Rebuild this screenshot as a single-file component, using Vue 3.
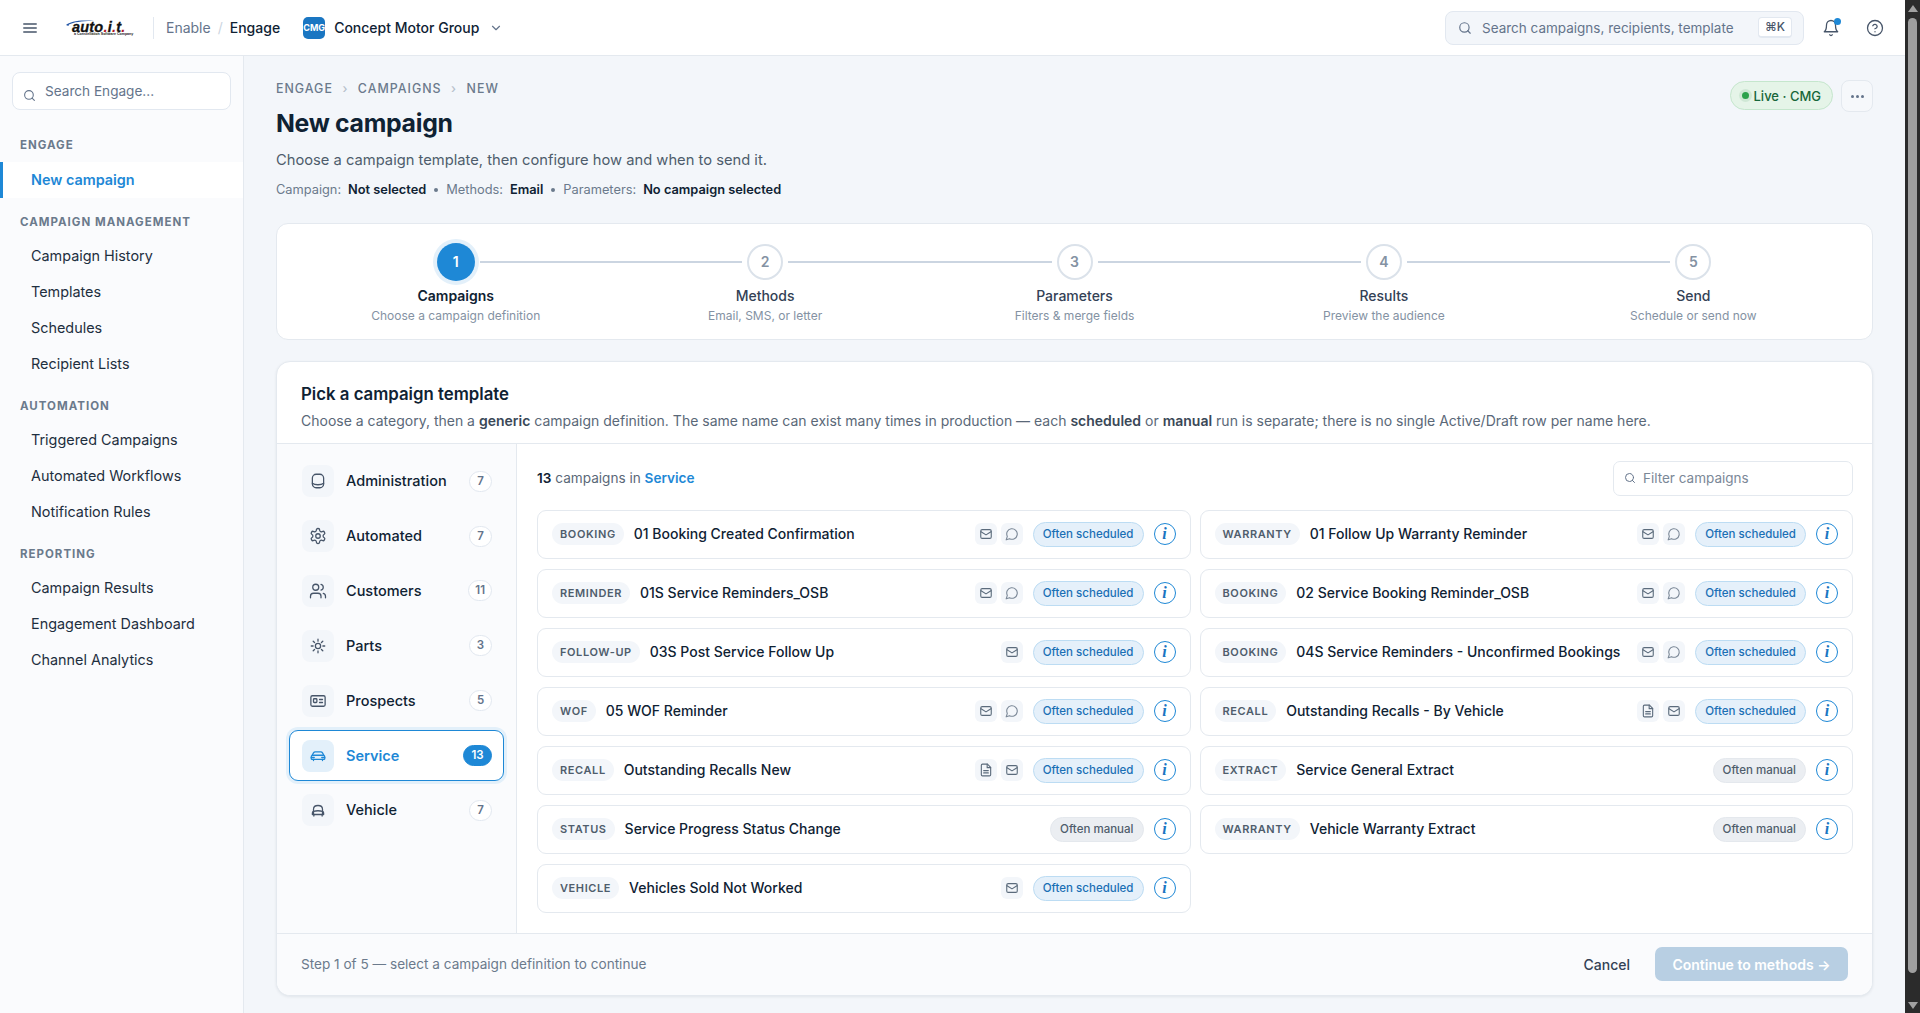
<script setup>
import { computed } from "vue";

const navGroups = [
  { title: "Engage", items: ["New campaign"] },
  { title: "Campaign Management", items: ["Campaign History", "Templates", "Schedules", "Recipient Lists"] },
  { title: "Automation", items: ["Triggered Campaigns", "Automated Workflows", "Notification Rules"] },
  { title: "Reporting", items: ["Campaign Results", "Engagement Dashboard", "Channel Analytics"] },
];

const steps = [
  { n: 1, label: "Campaigns", sub: "Choose a campaign definition" },
  { n: 2, label: "Methods", sub: "Email, SMS, or letter" },
  { n: 3, label: "Parameters", sub: "Filters & merge fields" },
  { n: 4, label: "Results", sub: "Preview the audience" },
  { n: 5, label: "Send", sub: "Schedule or send now" },
];

const categories = [
  { name: "Administration", count: 7, icon: "db" },
  { name: "Automated", count: 7, icon: "gear" },
  { name: "Customers", count: 11, icon: "users" },
  { name: "Parts", count: 3, icon: "sun" },
  { name: "Prospects", count: 5, icon: "card" },
  { name: "Service", count: 13, icon: "car" },
  { name: "Vehicle", count: 7, icon: "carFront" },
];

const activeCategory = "Service";

const campaigns = [
  { tag: "Booking", name: "01 Booking Created Confirmation", ch: ["mail", "chat"], often: "scheduled" },
  { tag: "Warranty", name: "01 Follow Up Warranty Reminder", ch: ["mail", "chat"], often: "scheduled" },
  { tag: "Reminder", name: "01S Service Reminders_OSB", ch: ["mail", "chat"], often: "scheduled" },
  { tag: "Booking", name: "02 Service Booking Reminder_OSB", ch: ["mail", "chat"], often: "scheduled" },
  { tag: "Follow-up", name: "03S Post Service Follow Up", ch: ["mail"], often: "scheduled" },
  { tag: "Booking", name: "04S Service Reminders - Unconfirmed Bookings", ch: ["mail", "chat"], often: "scheduled" },
  { tag: "WOF", name: "05 WOF Reminder", ch: ["mail", "chat"], often: "scheduled" },
  { tag: "Recall", name: "Outstanding Recalls - By Vehicle", ch: ["doc", "mail"], often: "scheduled" },
  { tag: "Recall", name: "Outstanding Recalls New", ch: ["doc", "mail"], often: "scheduled" },
  { tag: "Extract", name: "Service General Extract", ch: [], often: "manual" },
  { tag: "Status", name: "Service Progress Status Change", ch: [], often: "manual" },
  { tag: "Warranty", name: "Vehicle Warranty Extract", ch: [], often: "manual" },
  { tag: "Vehicle", name: "Vehicles Sold Not Worked", ch: ["mail"], often: "scheduled" },
];

const total = computed(() => campaigns.length);
</script>

<template>
  <div class="shell">
    <div class="page">
      <header class="topbar">
        <svg class="burger" viewBox="0 0 14 10" width="14" height="10" fill="none" stroke="#475569" stroke-width="1.5" stroke-linecap="round">
          <path d="M.8 1h12.4M.8 5h12.4M.8 9h12.4" />
        </svg>
        <div class="logo">
          <svg class="logo-swoosh" viewBox="0 0 28 6" width="28" height="6" fill="#2456a6">
            <path d="M0 5C4 1.500 14-.5 28 1 17 .8 8 2 3 4.400L2.400 6z" />
          </svg>
          <span class="logo-word">auto<b>.</b>i<b>.</b>t<b>.</b></span>
          <span class="logo-sub">a Constellation Software Company</span>
        </div>
        <span class="top-divider"></span>
        <span class="crumb-a">Enable</span>
        <span class="crumb-sep">/</span>
        <span class="crumb-b">Engage</span>
        <span class="org-tile">CMG</span>
        <span class="org-name">Concept Motor Group</span>
        <svg class="org-chev" viewBox="0 0 24 24" width="14" height="14" fill="none" stroke="#64748b" stroke-width="2" stroke-linecap="round" stroke-linejoin="round">
          <path d="m6 9 6 6 6-6" />
        </svg>
        <div class="top-search">
          <svg viewBox="0 0 24 24" width="14" height="14" fill="none" stroke="#64748b" stroke-width="2" stroke-linecap="round">
            <circle cx="11" cy="11" r="8" /><path d="m21 21-4.300-4.300" />
          </svg>
          <span class="top-search-text">Search campaigns, recipients, template</span>
          <span class="kbd">⌘K</span>
        </div>
        <div class="bell">
          <svg viewBox="0 0 24 24" width="18" height="18" fill="none" stroke="#475569" stroke-width="1.7" stroke-linecap="round" stroke-linejoin="round">
            <path d="M6 8a6 6 0 0 1 12 0c0 7 3 9 3 9H3s3-2 3-9" /><path d="M10.300 21a1.900 1.900 0 0 0 3.400 0" />
          </svg>
          <span class="bell-dot"></span>
        </div>
        <svg class="help" viewBox="0 0 24 24" width="18" height="18" fill="none" stroke="#475569" stroke-width="1.7" stroke-linecap="round" stroke-linejoin="round">
          <circle cx="12" cy="12" r="10" /><path d="M9.100 9a3 3 0 0 1 5.800 1c0 2-3 3-3 3" /><path d="M12 17h.01" />
        </svg>
      </header>

      <div class="body">
        <aside class="sidebar">
          <div class="side-search">
            <svg viewBox="0 0 24 24" width="13" height="13" fill="none" stroke="#64748b" stroke-width="2" stroke-linecap="round">
              <circle cx="11" cy="11" r="8" /><path d="m21 21-4.300-4.300" />
            </svg>
            <span>Search Engage...</span>
          </div>
          <div v-for="g in navGroups" :key="g.title" class="nav-group">
            <div class="nav-title">{{ g.title }}</div>
            <a v-for="item in g.items" :key="item" class="nav-item" :class="{ active: item === 'New campaign' }">{{ item }}</a>
          </div>
        </aside>

        <main class="main">
          <div class="head">
            <div class="head-left">
              <div class="breadcrumb">
                <span>Engage</span><i>›</i><span>Campaigns</span><i>›</i><span>New</span>
              </div>
              <h1 class="title">New campaign</h1>
              <p class="subtitle">Choose a campaign template, then configure how and when to send it.</p>
              <div class="meta">
                <span>Campaign:</span><b>Not selected</b><em></em>
                <span>Methods:</span><b>Email</b><em></em>
                <span>Parameters:</span><b>No campaign selected</b>
              </div>
            </div>
            <div class="head-right">
              <span class="live"><span class="live-dot"></span>Live · CMG</span>
              <button type="button" class="more"><span></span><span></span><span></span></button>
            </div>
          </div>

          <section class="stepper">
            <div v-for="(s, i) in steps" :key="s.n" class="step" :class="{ current: i === 0 }">
              <div class="step-track">
                <span v-if="i < steps.length - 1" class="step-line"></span>
                <span class="step-dot">{{ s.n }}</span>
              </div>
              <div class="step-label">{{ s.label }}</div>
              <div class="step-sub">{{ s.sub }}</div>
            </div>
          </section>

          <section class="picker">
            <div class="picker-head">
              <h2>Pick a campaign template</h2>
              <p>Choose a category, then a <b>generic</b> campaign definition. The same name can exist many times in production — each <b>scheduled</b> or <b>manual</b> run is separate; there is no single Active/Draft row per name here.</p>
            </div>
            <div class="picker-body">
              <div class="cats">
                <button
                  v-for="c in categories"
                  :key="c.name"
                  type="button"
                  class="cat"
                  :class="{ active: c.name === activeCategory }"
                >
                  <span class="cat-icon">
                    <svg viewBox="0 0 24 24" width="18" height="18" fill="none" stroke="currentColor" stroke-width="1.7" stroke-linecap="round" stroke-linejoin="round">
                      <template v-if="c.icon === 'db'">
                        <rect x="4.500" y="3" width="15" height="18" rx="5" /><path d="M4.500 15c2 1.600 4.600 2 7.500 2s5.500-.4 7.500-2" />
                      </template>
                      <template v-else-if="c.icon === 'gear'">
                        <path d="M12.220 2h-.44a2 2 0 0 0-2 2v.18a2 2 0 0 1-1 1.730l-.43.25a2 2 0 0 1-2 0l-.15-.08a2 2 0 0 0-2.730.73l-.22.38a2 2 0 0 0 .73 2.730l.15.1a2 2 0 0 1 1 1.720v.51a2 2 0 0 1-1 1.740l-.15.09a2 2 0 0 0-.73 2.730l.22.38a2 2 0 0 0 2.730.73l.15-.08a2 2 0 0 1 2 0l.43.25a2 2 0 0 1 1 1.730V20a2 2 0 0 0 2 2h.44a2 2 0 0 0 2-2v-.18a2 2 0 0 1 1-1.730l.43-.25a2 2 0 0 1 2 0l.15.08a2 2 0 0 0 2.730-.73l.22-.39a2 2 0 0 0-.73-2.730l-.15-.08a2 2 0 0 1-1-1.740v-.5a2 2 0 0 1 1-1.740l.15-.09a2 2 0 0 0 .73-2.730l-.22-.38a2 2 0 0 0-2.730-.73l-.15.08a2 2 0 0 1-2 0l-.43-.25a2 2 0 0 1-1-1.730V4a2 2 0 0 0-2-2z" /><circle cx="12" cy="12" r="3" />
                      </template>
                      <template v-else-if="c.icon === 'users'">
                        <path d="M16 21v-2a4 4 0 0 0-4-4H6a4 4 0 0 0-4 4v2" /><circle cx="9" cy="7" r="4" /><path d="M22 21v-2a4 4 0 0 0-3-3.870" /><path d="M16 3.130a4 4 0 0 1 0 7.750" />
                      </template>
                      <template v-else-if="c.icon === 'sun'">
                        <circle cx="12" cy="12" r="3.500" /><path d="M12 3v2.500M12 18.500V21M5.600 5.600l1.800 1.800M16.600 16.600l1.800 1.800M3 12h2.500M18.500 12H21M5.600 18.400l1.800-1.800M16.600 7.400l1.800-1.800" />
                      </template>
                      <template v-else-if="c.icon === 'card'">
                        <rect x="2.500" y="5" width="19" height="14" rx="2" /><rect x="6" y="9" width="4.500" height="5" rx="1" /><path d="M14 10h4M14 14h4" />
                      </template>
                      <template v-else-if="c.icon === 'car'">
                        <path d="M3 15.500v-2.300c0-1 .5-1.600 1.200-2.200L6 7.800C6.500 7 7.300 6.500 8.200 6.500h7.600c.9 0 1.700.5 2.200 1.300l1.800 3.200c.7.6 1.200 1.200 1.200 2.200v2.300c0 .6-.4 1-1 1H4c-.6 0-1-.4-1-1z" /><path d="M4.500 11h15M6 16.500V18M18 16.500V18" /><path d="M3 14h4M17 14h4" />
                      </template>
                      <template v-else>
                        <path d="M6 18v-7c0-3 2-5 6-5s6 2 6 5v7" /><path d="M4.500 16c0-1 .7-2 1.500-2.200 1.800-.5 3.800-.8 6-.8s4.200.3 6 .8c.8.2 1.500 1.200 1.500 2.200v2H4.500z" /><path d="M6.500 18v2M17.500 18v2" />
                      </template>
                    </svg>
                  </span>
                  <span class="cat-name">{{ c.name }}</span>
                  <span class="cat-count">{{ c.count }}</span>
                </button>
              </div>

              <div class="list">
                <div class="list-head">
                  <div class="list-count"><b>{{ total }}</b> campaigns in <span>Service</span></div>
                  <div class="filter">
                    <svg viewBox="0 0 24 24" width="12" height="12" fill="none" stroke="#64748b" stroke-width="2" stroke-linecap="round">
                      <circle cx="11" cy="11" r="8" /><path d="m21 21-4.300-4.300" />
                    </svg>
                    <span>Filter campaigns</span>
                  </div>
                </div>
                <div class="grid">
                  <div v-for="c in campaigns" :key="c.name" class="row">
                    <span class="tag">{{ c.tag }}</span>
                    <span class="name">{{ c.name }}</span>
                    <span v-for="ch in c.ch" :key="ch" class="ch" :class="ch">
                      <svg viewBox="0 0 24 24" width="14" height="14" fill="none" stroke-width="1.9" stroke-linecap="round" stroke-linejoin="round">
                        <template v-if="ch === 'mail'">
                          <rect x="3" y="4.500" width="18" height="15" rx="2.500" /><path d="m3.500 8 8.500 5.500L20.500 8" />
                        </template>
                        <template v-else-if="ch === 'chat'">
                          <path d="M7.900 20A9 9 0 1 0 4 16.100L2 22Z" />
                        </template>
                        <template v-else>
                          <path d="M14.500 2H6a2 2 0 0 0-2 2v16a2 2 0 0 0 2 2h12a2 2 0 0 0 2-2V7.500z" /><path d="M14 2v6h6M8 13h8M8 17h8" />
                        </template>
                      </svg>
                    </span>
                    <span class="often" :class="c.often">Often {{ c.often }}</span>
                    <span class="info">i</span>
                  </div>
                </div>
              </div>
            </div>
            <footer class="picker-foot">
              <span class="foot-text">Step 1 of 5 — select a campaign definition to continue</span>
              <button type="button" class="cancel">Cancel</button>
              <button type="button" class="continue">Continue to methods →</button>
            </footer>
          </section>
        </main>
      </div>
    </div>

    <div class="scrollbar">
      <span class="sb-up"></span>
      <span class="sb-thumb"></span>
      <span class="sb-down"></span>
    </div>
  </div>
</template>

<style>
html,
body {
  margin: 0;
  overflow: hidden;
}
</style>

<style scoped>
.shell {
  display: flex;
  height: 1013px;
  overflow: hidden;
  font-family: Inter, "Liberation Sans", sans-serif;
  color: #0f2233;
  background: #f3f6fa;
}

.page {
  flex: 1;
  min-width: 0;
  display: flex;
  flex-direction: column;
}

.topbar {
  height: 55px;
  flex: none;
  display: flex;
  align-items: center;
  padding-left: 23px;
  background: #fff;
  border-bottom: 1px solid #e4e9ef;
}

.logo {
  position: relative;
  width: 64px;
  height: 16px;
  margin-left: 29px;
}

.logo-swoosh {
  position: absolute;
  left: 0;
  top: 0;
}

.logo-word {
  position: absolute;
  left: 6px;
  top: 2px;
  font: italic 700 14.5px/11px "Liberation Sans", sans-serif;
  letter-spacing: 0.2px;
  -webkit-text-stroke: 0.3px #111;
  color: #111;
}

.logo-word b {
  color: #b0182c;
  -webkit-text-stroke: 0;
}

.logo-sub {
  position: absolute;
  left: 8px;
  top: 12px;
  font: 700 3.6px/5px "Liberation Sans", sans-serif;
  color: #222;
  white-space: nowrap;
}

.top-divider {
  width: 1px;
  height: 22px;
  margin: 0 12px 0 23px;
  background: #e2e8f0;
}

.crumb-a {
  font-size: 14px;
  color: #64748b;
}

.crumb-sep {
  margin: 0 7px;
  font-size: 14px;
  color: #cbd5e1;
}

.crumb-b {
  font-size: 14px;
  font-weight: 500;
  color: #0f2233;
}

.org-tile {
  width: 22px;
  height: 22px;
  margin-left: 23px;
  border-radius: 5px;
  background: #1a76c2;
  color: #fff;
  font-size: 9px;
  font-weight: 700;
  line-height: 22px;
  text-align: center;
}

.org-name {
  margin-left: 9px;
  font-size: 14px;
  font-weight: 500;
}

.org-chev {
  margin-left: 10px;
}

.top-search {
  margin-left: auto;
  width: 359px;
  height: 34px;
  box-sizing: border-box;
  display: flex;
  align-items: center;
  padding: 0 11px 0 12px;
  background: #f3f6fa;
  border: 1px solid #e2e8f0;
  border-radius: 8px;
}

.top-search-text {
  margin-left: 10px;
  flex: 1;
  min-width: 0;
  font-size: 13.5px;
  color: #64748b;
  white-space: nowrap;
}

.kbd {
  width: 34px;
  height: 21px;
  box-sizing: border-box;
  flex: none;
  background: #fff;
  border: 1px solid #e2e8f0;
  border-bottom-width: 2px;
  border-radius: 4px;
  font-size: 12px;
  font-weight: 500;
  line-height: 18px;
  text-align: center;
  color: #475569;
}

.bell {
  position: relative;
  width: 18px;
  height: 18px;
  margin-left: 18px;
}

.bell-dot {
  position: absolute;
  top: -1px;
  right: -1px;
  width: 7px;
  height: 7px;
  border-radius: 50%;
  background: #1e88d6;
}

.help {
  margin: 0 21px 0 26px;
}

.body {
  flex: 1;
  min-height: 0;
  display: flex;
}

.sidebar {
  width: 244px;
  flex: none;
  box-sizing: border-box;
  padding-top: 16px;
  background: #fafbfd;
  border-right: 1px solid #e4e9ef;
}

.side-search {
  height: 38px;
  box-sizing: border-box;
  margin: 0 12px;
  display: flex;
  align-items: center;
  padding-left: 10px;
  background: #fff;
  border: 1px solid #e2e8f0;
  border-radius: 8px;
  font-size: 13.6px;
  color: #64748b;
}

.side-search svg {
  margin: 9px 9px 0 0;
}

.side-search span {
  margin-top: -1px;
}

.nav-group {
  padding-top: 17px;
}

.side-search + .nav-group {
  padding-top: 27.5px;
}

.nav-title {
  height: 15px;
  padding-left: 20px;
  font-size: 11.5px;
  font-weight: 700;
  line-height: 14px;
  letter-spacing: 1px;
  text-transform: uppercase;
  color: #6b7a8c;
}

.nav-title + .nav-item {
  margin-top: 8px;
}

.nav-title + .nav-item.active {
  margin-top: 9px;
}

.nav-item {
  display: block;
  height: 36px;
  padding-left: 31px;
  font-size: 14.4px;
  line-height: 36px;
  color: #1e2f40;
}

.nav-item.active {
  padding-left: 28px;
  background: #fff;
  border-left: 3px solid #1e88d6;
  color: #1e88d6;
  font-weight: 600;
}

.main {
  flex: 1;
  min-width: 0;
  padding: 0 32px;
}

.head {
  display: flex;
  justify-content: space-between;
}

.head-left {
  padding-top: 24px;
}

.breadcrumb {
  display: flex;
  align-items: center;
  height: 16px;
  font-size: 12.4px;
  font-weight: 500;
  letter-spacing: 1px;
  text-transform: uppercase;
  color: #6b7a8c;
}

.breadcrumb i {
  width: 25px;
  font-style: normal;
  text-align: center;
  color: #b6c0cb;
}

.title {
  margin: 9px 0 0;
  font-size: 24.8px;
  font-weight: 700;
  line-height: 36px;
  letter-spacing: -0.3px;
  color: #0f2233;
}

.subtitle {
  margin: 8px 0 0;
  font-size: 14.72px;
  line-height: 22px;
  color: #4e5d6c;
}

.meta {
  display: flex;
  align-items: center;
  margin-top: 8.8px;
  font-size: 12.8px;
  line-height: 20px;
  color: #6b7a8c;
}

.meta b {
  margin-left: 7px;
  font-weight: 600;
  color: #0f2233;
}

.meta em {
  width: 4px;
  height: 4px;
  margin: 0 8px;
  border-radius: 50%;
  background: #6b7a8c;
}

.head-right {
  display: flex;
  gap: 8px;
  padding-top: 24px;
  align-items: flex-start;
}

.live {
  display: flex;
  align-items: center;
  gap: 5px;
  height: 29px;
  box-sizing: border-box;
  margin-top: 1px;
  padding: 0 11px;
  background: #e5f4e8;
  border: 1px solid #c5e6cd;
  border-radius: 15px;
  font-size: 13px;
  font-weight: 500;
  color: #17663a;
}

.live-dot {
  width: 7px;
  height: 7px;
  border-radius: 50%;
  background: #2ca24c;
  box-shadow: 0 0 0 3px #cfe8d5;
}

.more {
  width: 32px;
  height: 32px;
  display: flex;
  align-items: center;
  justify-content: center;
  gap: 2px;
  padding: 0;
  background: #f6f8fb;
  border: 1px solid #e4e9ef;
  border-radius: 8px;
}

.more span {
  width: 3px;
  height: 3px;
  border-radius: 50%;
  background: #64748b;
}

.stepper {
  display: flex;
  height: 117px;
  box-sizing: border-box;
  margin-top: 23px;
  padding: 19px 24px 0;
  background: #fff;
  border: 1px solid #e4e9ef;
  border-radius: 12px;
}

.step {
  flex: 1;
  text-align: center;
}

.step-track {
  position: relative;
  height: 38px;
  display: flex;
  justify-content: center;
  align-items: center;
}

.step-line {
  position: absolute;
  top: 18px;
  left: calc(50% + 23px);
  width: calc(100% - 46px);
  height: 2px;
  background: #cbd5e1;
}

.step-dot {
  width: 36px;
  height: 36px;
  box-sizing: border-box;
  border: 2px solid #dbe2ea;
  border-radius: 50%;
  background: #fff;
  font-size: 14px;
  font-weight: 600;
  line-height: 32px;
  color: #8492a3;
}

.step.current .step-dot {
  width: 38px;
  height: 38px;
  border: 0;
  background: #1e88d6;
  box-shadow: 0 0 0 4px #e3f0fa;
  color: #fff;
  line-height: 38px;
}

.step.current .step-line {
  left: calc(50% + 24px);
  width: calc(100% - 47px);
}

.step-label {
  margin-top: 6px;
  font-size: 14px;
  font-weight: 500;
  line-height: 18px;
  color: #334155;
}

.step.current .step-label {
  font-weight: 600;
  color: #0f2233;
}

.step-sub {
  margin-top: 2px;
  font-size: 12px;
  line-height: 18px;
  color: #8492a3;
}

.picker {
  margin-top: 21px;
  background: #fff;
  border: 1px solid #e4e9ef;
  border-radius: 14px;
  box-shadow: 0 1px 3px rgba(15, 34, 51, 0.08);
  overflow: hidden;
}

.picker-head {
  height: 82px;
  box-sizing: border-box;
  padding: 21px 24px 0;
  border-bottom: 1px solid #e4e9ef;
}

.picker-head h2 {
  margin: 0;
  font-size: 16.8px;
  font-weight: 600;
  line-height: 22px;
  color: #0f2233;
}

.picker-head p {
  margin: 6px 0 0;
  font-size: 14px;
  line-height: 20px;
  color: #5a6878;
}

.picker-head b {
  font-weight: 600;
  color: #3a4857;
}

.picker-body {
  display: flex;
  height: 489px;
}

.cats {
  width: 240px;
  flex: none;
  box-sizing: border-box;
  display: flex;
  flex-direction: column;
  gap: 4.2px;
  padding: 12px 12px 0;
  background: #fafbfd;
  border-right: 1px solid #e4e9ef;
}

.cat {
  display: flex;
  align-items: center;
  height: 50.7px;
  flex: none;
  box-sizing: border-box;
  padding: 0 11px 0 12px;
  background: transparent;
  border: 1px solid transparent;
  border-radius: 9px;
  font-family: inherit;
  color: #0f2233;
}

.cat-icon {
  width: 32px;
  height: 32px;
  flex: none;
  display: flex;
  align-items: center;
  justify-content: center;
  background: #f3f6fa;
  border-radius: 8px;
  color: #475569;
}

.cat-name {
  margin-left: 12px;
  margin-top: -1px;
  flex: 1;
  text-align: left;
  font-size: 14.5px;
  font-weight: 500;
}

.cat-count {
  min-width: 23px;
  box-sizing: border-box;
  height: 21px;
  padding: 0 6px;
  background: #fff;
  border: 1px solid #e2e8f0;
  border-radius: 11px;
  font-size: 11.5px;
  font-weight: 600;
  line-height: 19px;
  text-align: center;
  color: #64748b;
}

.cat.active {
  background: #fff;
  border-color: #1e88d6;
  box-shadow: 0 0 0 3px #e3f0fa;
  color: #1e88d6;
}

.cat.active .cat-icon {
  background: #e3f0fa;
  color: #1e88d6;
}

.cat.active .cat-name {
  font-weight: 600;
}

.cat.active .cat-count {
  background: #1e88d6;
  border-color: #1e88d6;
  color: #fff;
  min-width: 29px;
}

.list {
  flex: 1;
  min-width: 0;
  padding: 17px 19px 0 20px;
}

.list-head {
  display: flex;
  justify-content: space-between;
  align-items: center;
  height: 35px;
}

.list-count {
  font-size: 13.6px;
  color: #5a6878;
}

.list-count b {
  font-weight: 600;
  color: #0f2233;
}

.list-count span {
  font-weight: 600;
  color: #1e88d6;
}

.filter {
  width: 240px;
  height: 35px;
  box-sizing: border-box;
  display: flex;
  align-items: center;
  gap: 7px;
  padding-left: 10px;
  background: #fff;
  border: 1px solid #e4e9ef;
  border-radius: 7px;
  font-size: 13.5px;
  color: #7b8897;
}

.grid {
  display: grid;
  grid-template-columns: 1fr 1fr;
  gap: 10px 9px;
  margin-top: 14px;
}

.row {
  height: 49px;
  box-sizing: border-box;
  display: flex;
  align-items: center;
  min-width: 0;
  padding: 0 14px;
  background: #fff;
  border: 1px solid #e4e9ef;
  border-radius: 9px;
}

.tag {
  height: 22px;
  flex: none;
  padding: 0 8px;
  background: #f3f6fa;
  border-radius: 11px;
  font-size: 11px;
  font-weight: 600;
  line-height: 22px;
  letter-spacing: 0.6px;
  text-transform: uppercase;
  color: #4f5d6c;
}

.name {
  flex: 1;
  min-width: 0;
  margin-left: 10px;
  margin-top: -1px;
  font-size: 14px;
  font-weight: 500;
  white-space: nowrap;
  color: #0f2233;
}

.ch {
  width: 22px;
  height: 22px;
  flex: none;
  margin-right: 4px;
  display: flex;
  align-items: center;
  justify-content: center;
  background: #f3f6fa;
  border-radius: 6px;
  stroke: #5b6b7c;
}

.ch.chat {
  stroke: #7b8897;
}

.often {
  height: 25px;
  box-sizing: border-box;
  flex: none;
  margin-left: 6px;
  padding: 0 9px;
  border: 1px solid;
  border-radius: 13px;
  font-size: 11.52px;
  font-weight: 500;
  line-height: 22px;
}

.often.scheduled {
  background: #e5f0fa;
  border-color: #bcdcf3;
  color: #1a6fb5;
}

.often.manual {
  background: #ebeef2;
  border-color: #e4e8ed;
  color: #4f5d6c;
}

.info {
  width: 22px;
  height: 22px;
  box-sizing: border-box;
  flex: none;
  margin-left: 10px;
  border: 1.5px solid #1e88d6;
  border-radius: 50%;
  font: italic 700 16px/19px "Liberation Serif", serif;
  text-align: center;
  color: #1a76c2;
}

.picker-foot {
  height: 62px;
  box-sizing: border-box;
  display: flex;
  align-items: center;
  padding: 0 24px;
  background: #fafbfd;
  border-top: 1px solid #e4e9ef;
}

.foot-text {
  flex: 1;
  font-size: 13.6px;
  color: #6b7a8c;
}

.cancel {
  padding: 0;
  background: none;
  border: 0;
  font: 500 14px Inter, "Liberation Sans", sans-serif;
  color: #334155;
}

.continue {
  width: 193px;
  height: 34px;
  margin-left: 25px;
  padding: 0;
  background: #b8cfe3;
  border: 0;
  border-radius: 7px;
  font: 600 14px Inter, "Liberation Sans", sans-serif;
  color: #fff;
}

.scrollbar {
  width: 15px;
  flex: none;
  position: relative;
  display: flex;
  flex-direction: column;
  align-items: center;
  background: #2b2b2b;
}

.sb-up {
  margin-top: 5px;
  border: 5px solid transparent;
  border-top: 0;
  border-bottom: 7px solid #a0a0a0;
}

.sb-thumb {
  width: 9px;
  height: 955px;
  margin-top: 6px;
  border-radius: 5px;
  background: #9f9f9f;
}

.sb-down {
  margin-top: 29px;
  border: 5px solid transparent;
  border-bottom: 0;
  border-top: 7px solid #a0a0a0;
}
</style>
